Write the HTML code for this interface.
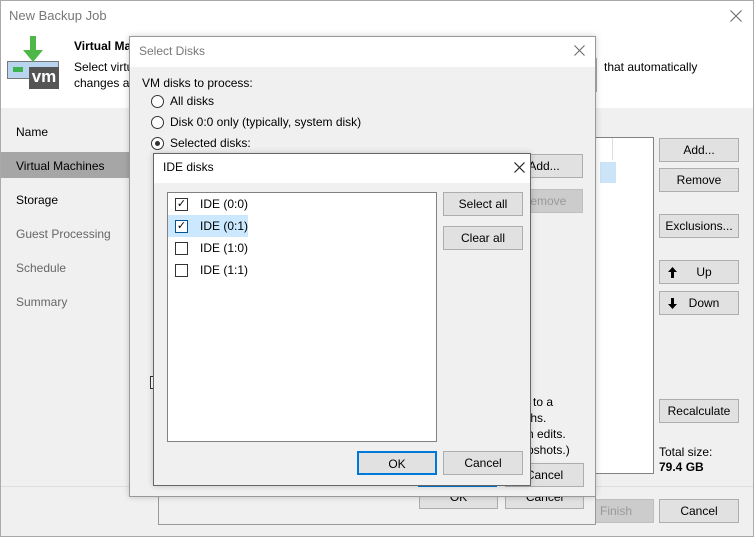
<!DOCTYPE html>
<html><head><style>
*{box-sizing:border-box;margin:0;padding:0}
body{width:754px;height:537px;overflow:hidden;font-family:"Liberation Sans",sans-serif;font-size:12px;color:#000;background:#fff;position:relative}
.a{position:absolute}
.btn{position:absolute;background:#e1e1e1;border:1px solid #adadad;text-align:center;line-height:22px;font-size:12px;height:24px}
.t{position:absolute;white-space:nowrap;font-size:12px}
.cb{position:absolute;width:13px;height:13px;border:1px solid #333;background:#fff;font-size:11px;line-height:11px;text-align:center}
.rd{position:absolute;width:13px;height:13px;border:1px solid #333;border-radius:50%;background:#fff}
</style></head><body>
<div class="a" style="left:0;top:0;width:754px;height:537px;border:1px solid #aaa;background:#f0f0f0"></div>
<div class="a" style="left:1px;top:1px;width:752px;height:107px;background:#fff"></div>
<div class="t" style="left:9px;top:8px;color:#777;font-size:13px">New Backup Job</div>
<svg class="a" style="left:730px;top:10px" width="12" height="12"><path d="M0.5 0.5L11.5 11.5M11.5 0.5L0.5 11.5" stroke="#666" stroke-width="1"/></svg>
<div class="a" style="left:7px;top:61px;width:52px;height:18px;background:#b8d4ee;border:1px solid #777"></div>
<div class="a" style="left:13px;top:67px;width:10px;height:5px;background:#3fb34f"></div>
<div class="a" style="left:29px;top:67px;width:30px;height:22px;background:#555;color:#fff;font-weight:bold;font-size:17px;line-height:20px;text-align:center">vm</div>
<svg class="a" style="left:18px;top:36px" width="30" height="28"><path d="M12 0h6v14h7l-10 12-10-12h7z" fill="#4db848"/></svg>
<div class="t" style="left:74px;top:39px;font-weight:bold">Virtual Ma</div>
<div class="t" style="left:74px;top:60px">Select virtu</div>
<div class="t" style="left:74px;top:76px">changes as</div>
<div class="a" style="left:596px;top:58px;width:4px;height:34px;border-left:1px solid #aaa;background:#fff"></div>
<div class="t" style="left:604px;top:60px">that automatically</div>
<div class="t" style="left:16px;top:125px">Name</div>
<div class="a" style="left:1px;top:152px;width:129px;height:26px;background:#a6a6a6"></div>
<div class="t" style="left:16px;top:159px">Virtual Machines</div>
<div class="t" style="left:16px;top:193px">Storage</div>
<div class="t" style="left:16px;top:227px;color:#666">Guest Processing</div>
<div class="t" style="left:16px;top:261px;color:#666">Schedule</div>
<div class="t" style="left:16px;top:295px;color:#666">Summary</div>
<div class="a" style="left:590px;top:137px;width:64px;height:337px;background:#fff;border:1px solid #828282"></div>
<div class="a" style="left:600px;top:162px;width:16px;height:21px;background:#cce4f7"></div>
<div class="a" style="left:612px;top:138px;width:1px;height:22px;background:#ddd"></div>
<div class="btn" style="left:659px;top:138px;width:80px">Add...</div>
<div class="btn" style="left:659px;top:168px;width:80px">Remove</div>
<div class="btn" style="left:659px;top:214px;width:80px">Exclusions...</div>
<div class="btn" style="left:659px;top:260px;width:80px"><svg style="position:absolute;left:8px;top:6px" width="9" height="11"><path d="M4.5 0L9 5H6V11H3V5H0z" fill="#000"/></svg><span style="padding-left:10px">Up</span></div>
<div class="btn" style="left:659px;top:291px;width:80px"><svg style="position:absolute;left:8px;top:6px" width="9" height="11"><path d="M4.5 11L9 6H6V0H3V6H0z" fill="#000"/></svg><span style="padding-left:10px">Down</span></div>
<div class="btn" style="left:659px;top:399px;width:80px">Recalculate</div>
<div class="t" style="left:659px;top:445px">Total size:</div>
<div class="t" style="left:659px;top:460px;font-weight:bold">79.4 GB</div>
<div class="a" style="left:1px;top:486px;width:752px;height:1px;background:#ddd"></div>
<div class="btn" style="left:578px;top:499px;width:76px;background:#ccc;border-color:#bfbfbf;color:#999">Finish</div>
<div class="btn" style="left:659px;top:499px;width:80px">Cancel</div>
<div class="a" style="left:158px;top:110px;width:438px;height:415px;background:#f0f0f0;border:1px solid #999"></div>
<div class="btn" style="left:419px;top:485px;width:79px">OK</div>
<div class="btn" style="left:505px;top:485px;width:79px">Cancel</div>
<div class="a" style="left:129px;top:36px;width:467px;height:461px;background:#f0f0f0;border:1px solid #999;box-shadow:0 0 6px rgba(0,0,0,.2)"></div>
<div class="a" style="left:130px;top:37px;width:465px;height:30px;background:#fff"></div>
<div class="t" style="left:139px;top:44px;color:#777">Select Disks</div>
<svg class="a" style="left:574px;top:45px" width="11" height="11"><path d="M0.5 0.5L10.5 10.5M10.5 0.5L0.5 10.5" stroke="#666" stroke-width="1"/></svg>
<div class="t" style="left:142px;top:76px">VM disks to process:</div>
<div class="rd" style="left:151px;top:95px"></div><div class="t" style="left:170px;top:94px">All disks</div>
<div class="rd" style="left:151px;top:116px"></div><div class="t" style="left:170px;top:115px">Disk 0:0 only (typically, system disk)</div>
<div class="rd" style="left:151px;top:137px"></div><div class="a" style="left:155px;top:141px;width:5px;height:5px;border-radius:50%;background:#333"></div><div class="t" style="left:170px;top:136px">Selected disks:</div>
<div class="btn" style="left:505px;top:154px;width:78px">Add...</div>
<div class="btn" style="left:505px;top:189px;width:78px;background:#ccc;border-color:#bfbfbf;color:#999">Remove</div>
<div class="cb" style="left:150px;top:376px"></div>
<div class="t" style="left:527px;top:395px">l to a</div>
<div class="t" style="left:527px;top:411px">ths.</div>
<div class="t" style="left:527px;top:427px">n edits.</div>
<div class="t" style="left:527px;top:443px">pshots.)</div>
<div class="btn" style="left:418px;top:463px;width:79px;border:2px solid #0078d7">OK</div>
<div class="btn" style="left:505px;top:463px;width:79px">Cancel</div>
<div class="a" style="left:153px;top:153px;width:378px;height:333px;background:#f0f0f0;border:1px solid #666;box-shadow:0 0 6px rgba(0,0,0,.2)"></div>
<div class="a" style="left:154px;top:154px;width:376px;height:29px;background:#fff"></div>
<div class="t" style="left:163px;top:160px">IDE disks</div>
<svg class="a" style="left:514px;top:162px" width="11" height="11"><path d="M0.5 0.5L10.5 10.5M10.5 0.5L0.5 10.5" stroke="#222" stroke-width="1.2"/></svg>
<div class="a" style="left:167px;top:192px;width:270px;height:250px;background:#fff;border:1px solid #828282"></div>
<div class="a" style="left:168px;top:215px;width:80px;height:22px;background:#cce8ff"></div>
<div class="cb" style="left:175px;top:198px">✓</div><div class="t" style="left:200px;top:197px">IDE (0:0)</div>
<div class="cb" style="left:175px;top:220px;border-color:#005499">✓</div><div class="t" style="left:200px;top:219px">IDE (0:1)</div>
<div class="cb" style="left:175px;top:242px"></div><div class="t" style="left:200px;top:241px">IDE (1:0)</div>
<div class="cb" style="left:175px;top:264px"></div><div class="t" style="left:200px;top:263px">IDE (1:1)</div>
<div class="btn" style="left:443px;top:192px;width:80px">Select all</div>
<div class="btn" style="left:443px;top:226px;width:80px">Clear all</div>
<div class="btn" style="left:357px;top:451px;width:80px;border:2px solid #0078d7">OK</div>
<div class="btn" style="left:443px;top:451px;width:80px">Cancel</div>
</body></html>
